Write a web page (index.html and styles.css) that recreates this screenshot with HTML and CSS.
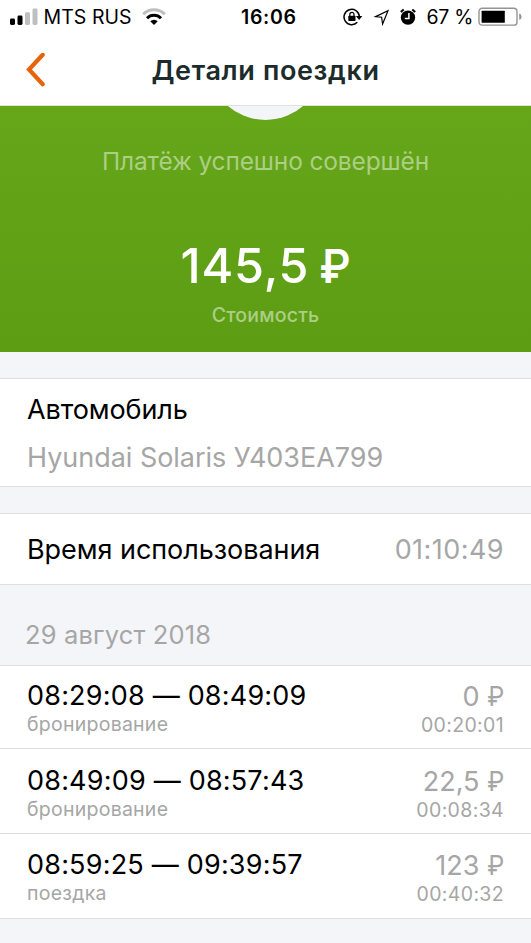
FILE: index.html
```html
<!DOCTYPE html>
<html lang="ru">
<head>
<meta charset="utf-8">
<title>Детали поездки</title>
<link rel="stylesheet" href="styles.css">
</head>
<body>
<header class="top">
  <div class="status">
    <div class="status-left">
      <svg class="signal" width="28" height="18" viewBox="0 0 28 18"><rect x="0" y="10.5" width="5" height="6.5" rx="1.4"/><rect x="7.5" y="7.5" width="5" height="9.5" rx="1.4"/><g fill="#bfbfbf"><rect x="15" y="4.2" width="5" height="12.8" rx="1.4"/><rect x="22.5" y="0.5" width="5" height="16.5" rx="1.4"/></g></svg>
      <span class="carrier">MTS RUS</span>
      <svg class="wifi" width="24" height="18" viewBox="0 0 24 18"><g fill="none" stroke-width="3"><path stroke="#bfbfbf" d="M1.2 6.2A15.3 15.3 0 0 1 22.8 6.2"/><path stroke="#000" d="M5 10.2A9.9 9.9 0 0 1 19 10.2"/></g><path d="M8.3 13.2A5.2 5.2 0 0 1 15.7 13.2L12 17Z"/></svg>
    </div>
    <span class="clock">16:06</span>
    <div class="status-right">
      <svg class="lock" width="20" height="18" viewBox="0 0 20 18"><path fill="none" stroke="#000" stroke-width="1.5" d="M14.3 14.3A7.7 7.7 0 1 1 16.4 8.3"/><path d="M12.9 8H19.3L16.1 12Z"/><rect x="5.3" y="7.8" width="7.2" height="5.2" rx=".7"/><path fill="none" stroke="#000" stroke-width="1.2" d="M6.8 8V6.4a2.1 2.1 0 0 1 4.2 0V8"/></svg>
      <svg class="arrow" width="17" height="17" viewBox="0 0 17 17"><path fill="none" stroke="#000" stroke-width="1.2" stroke-linejoin="miter" d="M2.6 7.6L15 1.6L9.6 15L8.6 8.2Z"/></svg>
      <svg class="alarm" width="16" height="18" viewBox="0 0 16 18"><circle cx="8" cy="9.6" r="7.2"/><g fill="none" stroke="#000" stroke-width="2"><path d="M.8 4.1L3.7 1.6M15.2 4.1L12.3 1.6"/></g><path fill="none" stroke="#fff" stroke-width="1.5" d="M8.9 5V10.4H4.8"/></svg>
      <span class="percent">67 %</span>
      <svg class="battery" width="45" height="20" viewBox="0 0 45 20"><rect x="1" y="1.3" width="38" height="16.8" rx="3.2" fill="#fff" stroke="#949494" stroke-width="1.4"/><rect x="3.6" y="3.8" width="23.2" height="12" rx=".5"/><path fill="#949494" d="M41.2 6.6Q43.6 7.2 43.6 9.7T41.2 12.8Z"/></svg>
    </div>
  </div>
  <div class="nav">
    <svg class="back" width="20" height="36" viewBox="0 0 20 36"><path fill="none" stroke="#e8640a" stroke-width="4.2" stroke-linecap="round" stroke-linejoin="miter" d="M17.7 1.8L4 16.5L17.7 31.2"/></svg>
    <h1 class="title">Детали поездки</h1>
  </div>
</header>
<section class="hero">
  <div class="circle"></div>
  <p class="paid">Платёж успешно совершён</p>
  <p class="price">145,5 <span class="rub">₽</span></p>
  <p class="caption">Стоимость</p>
</section>
<section class="card car">
  <p>Автомобиль</p>
  <p class="value">Hyundai Solaris У403ЕА799</p>
</section>
<section class="card usage">
  <span>Время использования</span><span class="value duration">01:10:49</span>
</section>
<h2 class="date">29 август 2018</h2>
<section class="trips">
  <div class="trip">
    <div><p class="time">08:29:08 — 08:49:09</p><p class="kind">бронирование</p></div>
    <div class="right"><p class="cost">0 <span class="rub">₽</span></p><p class="len">00:20:01</p></div>
  </div>
  <div class="trip">
    <div><p class="time">08:49:09 — 08:57:43</p><p class="kind">бронирование</p></div>
    <div class="right"><p class="cost">22,5 <span class="rub">₽</span></p><p class="len">00:08:34</p></div>
  </div>
  <div class="trip">
    <div><p class="time">08:59:25 — 09:39:57</p><p class="kind">поездка</p></div>
    <div class="right"><p class="cost">123 <span class="rub">₽</span></p><p class="len">00:40:32</p></div>
  </div>
</section>
</body>
</html>
```
FILE: styles.css
```css
* { box-sizing: border-box; }
body { margin: 0; width: 531px; min-height: 943px; background: #f4f5f8; color: #000; font-family: Inter, "Liberation Sans", sans-serif; font-size: 27px; }
p, h1, h2 { margin: 0; font-weight: 400; white-space: nowrap; }
svg { display: block; flex: none; }
.top { height: 106px; background: #fff; border-bottom: 1px solid #e2e2e2; }
.status { height: 34px; display: grid; grid-template-columns: 241px 57px 1fr; align-items: center; font-size: 19.5px; line-height: 34px; white-space: nowrap; }
.status-left { display: flex; align-items: center; padding-left: 10px; }
.carrier { margin-left: 5.5px; letter-spacing: .05px; }
.wifi { margin-left: 10px; }
.clock { font-weight: 600; letter-spacing: .7px; }
.status-right { display: flex; align-items: center; justify-content: flex-end; padding-right: 8px; }
.arrow { margin-left: 10px; }
.alarm { margin-left: 10px; }
.percent { margin-left: 10px; letter-spacing: -.3px; }
.battery { margin-left: 5px; }
.nav { height: 71px; display: grid; grid-template-columns: 60px 1fr 60px; align-items: center; padding-top: 2px; }
.back { margin-left: 25px; }
.title { font-size: 27px; font-weight: 600; letter-spacing: .65px; color: #1c2b2b; justify-self: center; line-height: 40px; }
.hero { position: relative; height: 246px; overflow: hidden; text-align: center; color: #fff; background: linear-gradient(#66a619, #5d9d14); padding-top: 35px; }
.circle { position: absolute; left: 208px; top: -101px; width: 115px; height: 115px; border-radius: 50%; background: #f4f5f8; }
.paid { font-size: 24.5px; line-height: 40px; letter-spacing: -.15px; color: #acce85; }
.price { font-size: 48.5px; font-weight: 500; line-height: 70px; margin-top: 50px; letter-spacing: .8px; }
.price .rub { margin-left: -6px; }
.caption { font-size: 19.5px; font-weight: 500; line-height: 28px; letter-spacing: .2px; color: #acce85; }
.card { background: #fff; border: solid #dedede; border-width: 1px 0; margin-top: 26px; padding: 0 27px; }
.car { height: 109px; padding-top: 11px; line-height: 40px; letter-spacing: -.1px; }
.car .value { margin-top: 8px; letter-spacing: -.03px; }
.value { color: #a6a6a6; }
.usage { height: 72px; display: flex; justify-content: space-between; align-items: center; letter-spacing: -.05px; }
.duration { letter-spacing: .45px; }
.date { height: 80px; padding: 30px 25px 0; font-size: 25.5px; line-height: 40px; letter-spacing: .15px; color: #a6a6a6; }
.trips { border-top: 1px solid #dedede; }
.trip { height: 85px; display: flex; justify-content: space-between; background: #fff; border-bottom: 1px solid #dedede; padding: 14px 27px 0; }
.trip:first-child { height: 83px; padding-top: 13px; }
.trip:nth-child(2) { padding-top: 15px; }
.time { line-height: 33px; letter-spacing: .2px; }
.cost { line-height: 35px; color: #a6a6a6; }
.kind, .len { font-size: 19.5px; line-height: 25px; letter-spacing: .25px; color: #a6a6a6; }
.len { letter-spacing: .35px; margin-top: -1px; }
.right { text-align: right; }
.rub { display: inline-block; line-height: 1; font-family: Roboto, Inter, sans-serif; transform: scaleX(.9); transform-origin: right; letter-spacing: 0; }
.cost .rub { margin-left: -1px; }
```
